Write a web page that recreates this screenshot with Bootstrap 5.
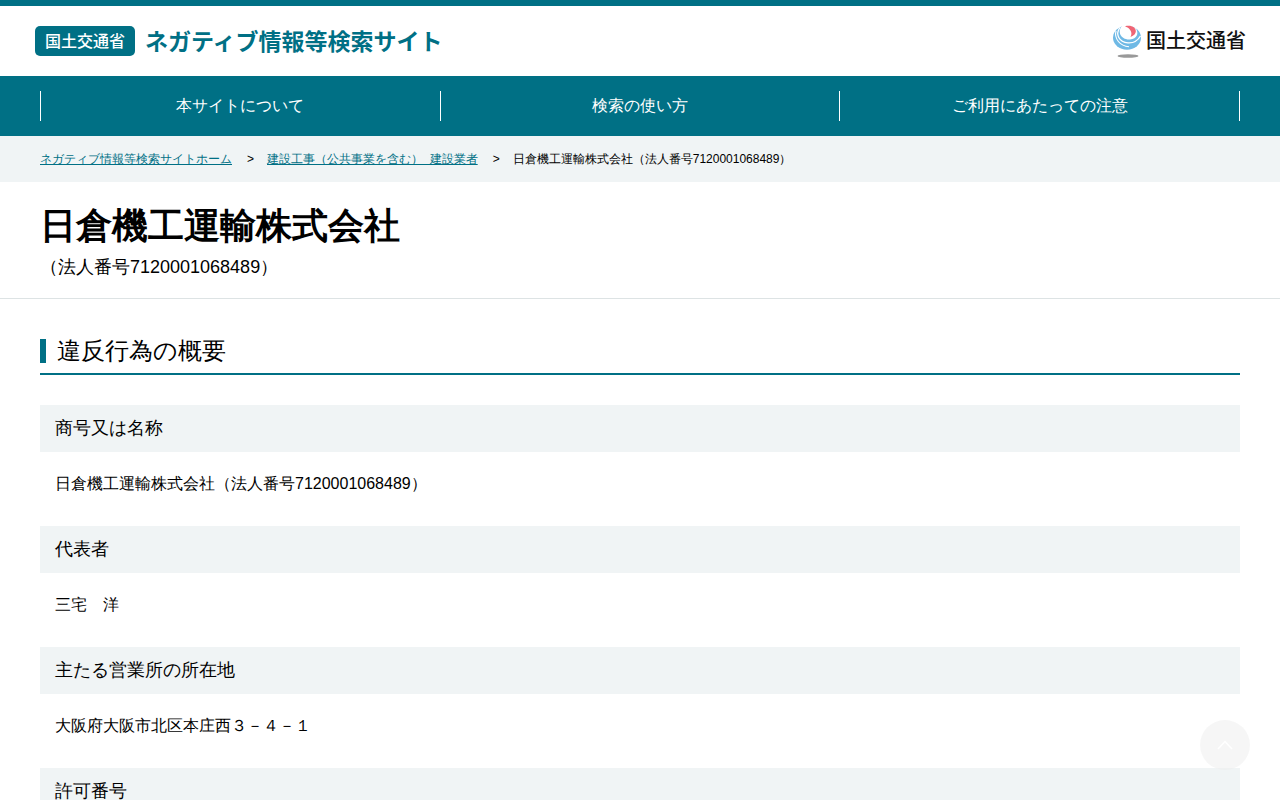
<!DOCTYPE html>
<html lang="ja">
<head>
<meta charset="utf-8">
<meta name="viewport" content="width=device-width, initial-scale=1">
<title>日倉機工運輸株式会社 | ネガティブ情報等検索サイト</title>
<link href="https://cdn.jsdelivr.net/npm/bootstrap@5.3.0/dist/css/bootstrap.min.css" rel="stylesheet">
<style>
:root { --teal: #007085; --pale: #f0f4f5; }
body { font-family: "Liberation Sans", sans-serif; color: #000; line-height: 24px; }
.wrap { max-width: 1200px; margin: 0 auto; }
.site-header { border-top: 6px solid var(--teal); padding: 0 34px 0 35px; min-height: 76px; }
.brand-link { color: var(--teal); font-family: "Noto Sans CJK JP", sans-serif; gap: 10px; }
.brand-tag { background: var(--teal); color: #fff; font-size: 16px; font-weight: 500; line-height: 28px; padding-bottom: 2px; width: 100px; border-radius: 5px; }
.brand-name { font-size: 23px; font-weight: 700; line-height: 28px; padding-bottom: 2px; }
.ministry { color: #111; font-family: "Noto Sans CJK JP", sans-serif; font-size: 20px; font-weight: 500; line-height: 30px; }
.ministry span { padding-bottom: 2px; }
.main-nav { background: var(--teal); padding: 15px 0; }
.main-nav li { border-right: 1px solid #fff; }
.main-nav li:first-child { border-left: 1px solid #fff; }
.main-nav a { color: #fff; line-height: 30px; }
.crumbs { background: var(--pale); font-size: 12px; line-height: 18px; padding: 14px 0; }
.crumbs a { color: var(--teal); }
.crumbs li + li::before { content: ">"; margin: 0 13px 0 15px; }
.title-band { border-bottom: 1px solid #dde3e4; padding: 16px 0 18px; }
.title-band h1 { font-size: 36px; font-weight: 700; line-height: 56px; }
.title-band p { font-size: 18px; line-height: 26px; }
.section-title { font-size: 24px; font-weight: 400; line-height: 24px; border-bottom: 2px solid var(--teal); padding-bottom: 10px; margin: 40px 0 30px; }
.section-title span { display: block; border-left: 6px solid var(--teal); padding-left: 11px; }
.facts dt { background: var(--pale); font-size: 18px; font-weight: 400; line-height: 27px; padding: 10px 15px; }
.facts dd { line-height: 24px; padding: 20px 15px 30px; }
.to-top { right: 30px; bottom: 30px; width: 50px; height: 50px; background: #eee; opacity: .5; }
</style>
</head>
<body>
<header class="site-header d-flex align-items-center justify-content-between">
  <a class="brand-link d-flex align-items-center text-decoration-none" href="#">
    <span class="brand-tag text-center">国土交通省</span>
    <span class="brand-name">ネガティブ情報等検索サイト</span>
  </a>
  <a class="ministry d-flex align-items-center text-decoration-none" href="#">
    <svg class="me-1" width="30" height="34" viewBox="0 0 30 34" aria-hidden="true">
      <g transform="translate(0 1) scale(1 .85)">
        <circle cx="15" cy="15" r="14" fill="#6fb9e5"/>
        <path d="M11 0C4 7 9 18 18 17C25 16 27 10 24 4L18 0Z" fill="#fff"/>
        <path d="M8 3C3 11 7 20 16 21C22 21.500 26 18 28.500 13" fill="none" stroke="#fff" stroke-width="1.300"/>
        <path d="M4 7C2 16 8 25 17 25.500" fill="none" stroke="#fff" stroke-width="1.100"/>
        <path d="M13 1.500C24-1.500 28 10 18.500 14C21 8 18 4 13 1.500Z" fill="#ef6575"/>
      </g>
      <ellipse cx="16" cy="32" rx="10.500" ry="1.800" fill="#999"/>
    </svg>
    <span>国土交通省</span>
  </a>
</header>
<nav class="main-nav" aria-label="メインメニュー">
  <ul class="wrap list-unstyled row g-0 text-center">
    <li class="col"><a class="d-block text-decoration-none" href="#">本サイトについて</a></li>
    <li class="col"><a class="d-block text-decoration-none" href="#">検索の使い方</a></li>
    <li class="col"><a class="d-block text-decoration-none" href="#">ご利用にあたっての注意</a></li>
  </ul>
</nav>
<nav class="crumbs" aria-label="パンくずリスト">
  <ol class="wrap list-unstyled d-flex flex-wrap">
    <li><a href="#">ネガティブ情報等検索サイトホーム</a></li>
    <li><a href="#">建設工事（公共事業を含む）&nbsp; 建設業者</a></li>
    <li aria-current="page">日倉機工運輸株式会社（法人番号7120001068489）</li>
  </ol>
</nav>
<main>
  <div class="title-band">
    <div class="wrap">
      <h1 class="mb-0">日倉機工運輸株式会社</h1>
      <p class="mb-0">（法人番号7120001068489）</p>
    </div>
  </div>
  <section class="wrap">
    <h2 class="section-title"><span>違反行為の概要</span></h2>
    <dl class="facts mb-0">
      <dt>商号又は名称</dt>
      <dd class="mb-0">日倉機工運輸株式会社（法人番号7120001068489）</dd>
      <dt>代表者</dt>
      <dd class="mb-0">三宅　洋</dd>
      <dt>主たる営業所の所在地</dt>
      <dd class="mb-0">大阪府大阪市北区本庄西３－４－１</dd>
      <dt>許可番号</dt>
    </dl>
  </section>
</main>
<a class="to-top position-fixed rounded-circle d-flex align-items-center justify-content-center" href="#" aria-label="ページの先頭へ">
  <svg width="16" height="10" viewBox="0 0 16 10" fill="none" stroke="#fff" stroke-width="1.500" aria-hidden="true"><path d="M1 9L8 1.500L15 9"/></svg>
</a>
<script src="https://cdn.jsdelivr.net/npm/bootstrap@5.3.0/dist/js/bootstrap.bundle.min.js"></script>
</body>
</html>
